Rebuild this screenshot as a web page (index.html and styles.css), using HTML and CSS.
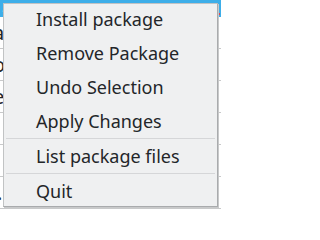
FILE: index.html
```html
<!DOCTYPE html>
<html>
<head>
<meta charset="utf-8">
<link rel="stylesheet" href="styles.css">
</head>
<body>
<div class="window">
  <div class="titlebar"><span class="title">.qt 5 1</span><span class="dot"></span></div>
  <div class="row"><span class="frag">a</span></div>
  <div class="row"><span class="frag">o</span></div>
  <div class="row"><span class="frag">e</span></div>
  <div class="row"></div>
  <div class="row"></div>
  <div class="row"><span class="frag small">.</span></div>
</div>
<div class="menu">
  <div class="item">Install package</div>
  <div class="item">Remove Package</div>
  <div class="item">Undo Selection</div>
  <div class="item">Apply Changes</div>
  <div class="sep"></div>
  <div class="item">List package files</div>
  <div class="sep"></div>
  <div class="item last">Quit</div>
</div>
</body>
</html>
```
FILE: styles.css
```css
html, body {
  margin: 0;
  padding: 0;
}
body {
  width: 221px;
  height: 210px;
  overflow: hidden;
  position: relative;
  background: #ffffff;
  font-family: "Noto Sans", "Open Sans", sans-serif;
}
.window {
  display: flex;
  flex-direction: column;
}
.titlebar {
  height: 17px;
  background: #3daee9;
  color: #ffffff;
  font-size: 12px;
  line-height: 16px;
  position: relative;
}
.title {
  padding-left: 2px;
}
.dot {
  position: absolute;
  right: 1px;
  bottom: 2px;
  width: 2px;
  height: 2px;
  background: #da4453;
}
.row {
  height: 31px;
  border-bottom: 1px solid #c8c9ca;
  font-size: 20px;
  line-height: 31px;
  color: #232629;
  overflow: hidden;
}
.frag {
  display: inline-block;
  margin-left: -7px;
}
.small {
  margin-left: -3px;
}
.menu {
  position: absolute;
  left: 3px;
  top: 3px;
  width: 213px;
  background: #eff0f1;
  border: 1px solid #c1c3c4;
  border-right-color: #a9abad;
  border-bottom-color: #a9abad;
  box-shadow: 1px 1px 0 #c8c9ca;
  color: #232629;
  font-size: 18px;
}
.item {
  height: 30px;
  line-height: 30px;
  padding-bottom: 4px;
  padding-left: 32px;
  white-space: nowrap;
}
.item.last {
  padding-bottom: 0;
}
.sep {
  height: 1px;
  margin: -2px 2px 2px;
  background: #d5d6d8;
}
```
